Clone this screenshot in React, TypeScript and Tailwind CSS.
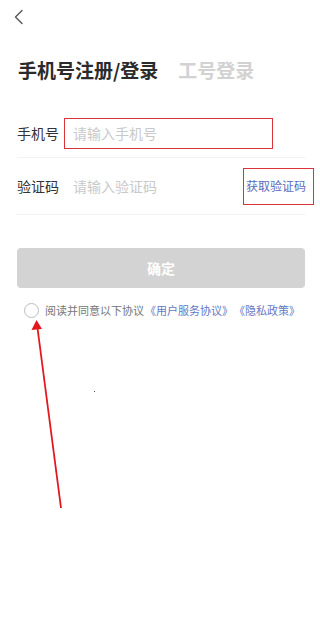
export default function App() {
  return (
    <div
      className="relative w-[320px] h-[636px] bg-white overflow-hidden"
      style={{ fontFamily: '"Noto Sans CJK SC", "Noto Sans", sans-serif' }}
    >
      {/* Top bar */}
      <div className="h-[34px] flex items-center pl-[13px]">
        <svg width="12" height="16" viewBox="0 0 12 16" fill="none">
          <path d="M9 1.5 L2.5 8 L9 14.5" stroke="#555" strokeWidth="1.4" strokeLinecap="round" strokeLinejoin="round" />
        </svg>
      </div>

      {/* Tabs */}
      <div className="mt-[23px] flex items-center gap-[20px] pl-[18px] h-[26px]">
        <span className="text-[19px] leading-[26px] font-bold text-[#2b2b2b]">手机号注册/登录</span>
        <span className="text-[19px] leading-[26px] font-bold text-[#d2d2d2]">工号登录</span>
      </div>

      {/* Form */}
      <div className="mt-[26px] ml-[17px] mr-[15px] flex flex-col">
        <div className="h-[49px] flex items-center border-b border-[#f2f2f2]">
          <span className="w-[47px] shrink-0 text-[14px] text-[#333]">手机号</span>
          <div className="h-[31px] w-[209px] border border-[#d9343a] flex items-center pl-[8px]">
            <span className="text-[14px] text-[#c9c9c9]">请输入手机号</span>
          </div>
        </div>
        <div className="h-[57px] flex items-center border-b border-[#f2f2f2]">
          <span className="w-[47px] shrink-0 text-[14px] text-[#333]">验证码</span>
          <span className="pl-[9px] flex-1 text-[14px] text-[#c9c9c9]">请输入验证码</span>
          <div className="h-[37px] w-[71px] mr-[-9px] border border-[#d9343a] flex items-center pl-[2px]">
            <span className="text-[12px] text-[#5a6cbd] whitespace-nowrap">获取验证码</span>
          </div>
        </div>
      </div>

      {/* Submit */}
      <div className="mt-[33px] ml-[17px] mr-[15px] h-[40px] rounded-[4px] bg-[#d3d3d3] flex items-center justify-center">
        <span className="text-[14px] font-bold text-white">确定</span>
      </div>

      {/* Agreement */}
      <div className="mt-[14px] ml-[24px] flex items-center h-[16px]">
        <span className="w-[15px] h-[15px] rounded-full border border-[#bdbdbd]" />
        <span className="ml-[6px] text-[11px] text-[#777] whitespace-nowrap">阅读并同意以下协议</span>
        <span className="ml-[1px] text-[11px] text-[#6677c4] whitespace-nowrap">《用户服务协议》</span>
        <span className="ml-[1px] text-[11px] text-[#6677c4] whitespace-nowrap">《隐私政策》</span>
      </div>

      {/* Annotation arrow */}
      <svg className="absolute left-0 top-0 pointer-events-none" width="320" height="636" viewBox="0 0 320 636">
        <line x1="61" y1="508" x2="37.5" y2="328" stroke="#e3181f" strokeWidth="1.8" />
        <path d="M36.5 320 L31.5 330 L42 329 Z" fill="#e3181f" />
      </svg>
      <span className="absolute left-[94px] top-[391px] w-[1px] h-[1px] bg-[#555]" />
    </div>
  );
}
